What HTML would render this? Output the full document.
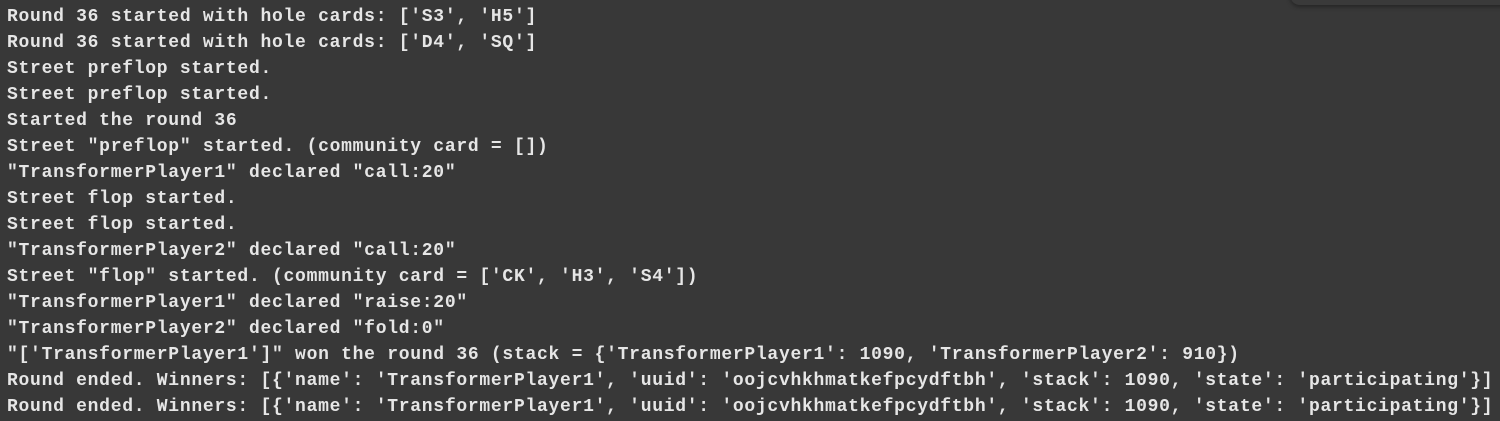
<!DOCTYPE html>
<html><head><meta charset="utf-8"><style>
html,body{margin:0;padding:0;background:#383838;width:1500px;height:421px;overflow:hidden;position:relative}
pre{margin:0;position:absolute;left:7px;top:4px;font-family:"Liberation Mono",monospace;font-size:18px;letter-spacing:0.72px;line-height:26px;color:#e6e6e6;font-weight:bold;white-space:pre}
.pop{position:absolute;left:1290px;top:-20px;width:230px;height:25px;border-radius:10px;background:#3a3a3a;box-shadow:0 2px 4px rgba(0,0,0,0.35)}
</style></head><body>
<div class="pop"></div>
<pre>Round 36 started with hole cards: ['S3', 'H5']
Round 36 started with hole cards: ['D4', 'SQ']
Street preflop started.
Street preflop started.
Started the round 36
Street "preflop" started. (community card = [])
"TransformerPlayer1" declared "call:20"
Street flop started.
Street flop started.
"TransformerPlayer2" declared "call:20"
Street "flop" started. (community card = ['CK', 'H3', 'S4'])
"TransformerPlayer1" declared "raise:20"
"TransformerPlayer2" declared "fold:0"
"['TransformerPlayer1']" won the round 36 (stack = {'TransformerPlayer1': 1090, 'TransformerPlayer2': 910})
Round ended. Winners: [{'name': 'TransformerPlayer1', 'uuid': 'oojcvhkhmatkefpcydftbh', 'stack': 1090, 'state': 'participating'}]
Round ended. Winners: [{'name': 'TransformerPlayer1', 'uuid': 'oojcvhkhmatkefpcydftbh', 'stack': 1090, 'state': 'participating'}]</pre>
</body></html>
